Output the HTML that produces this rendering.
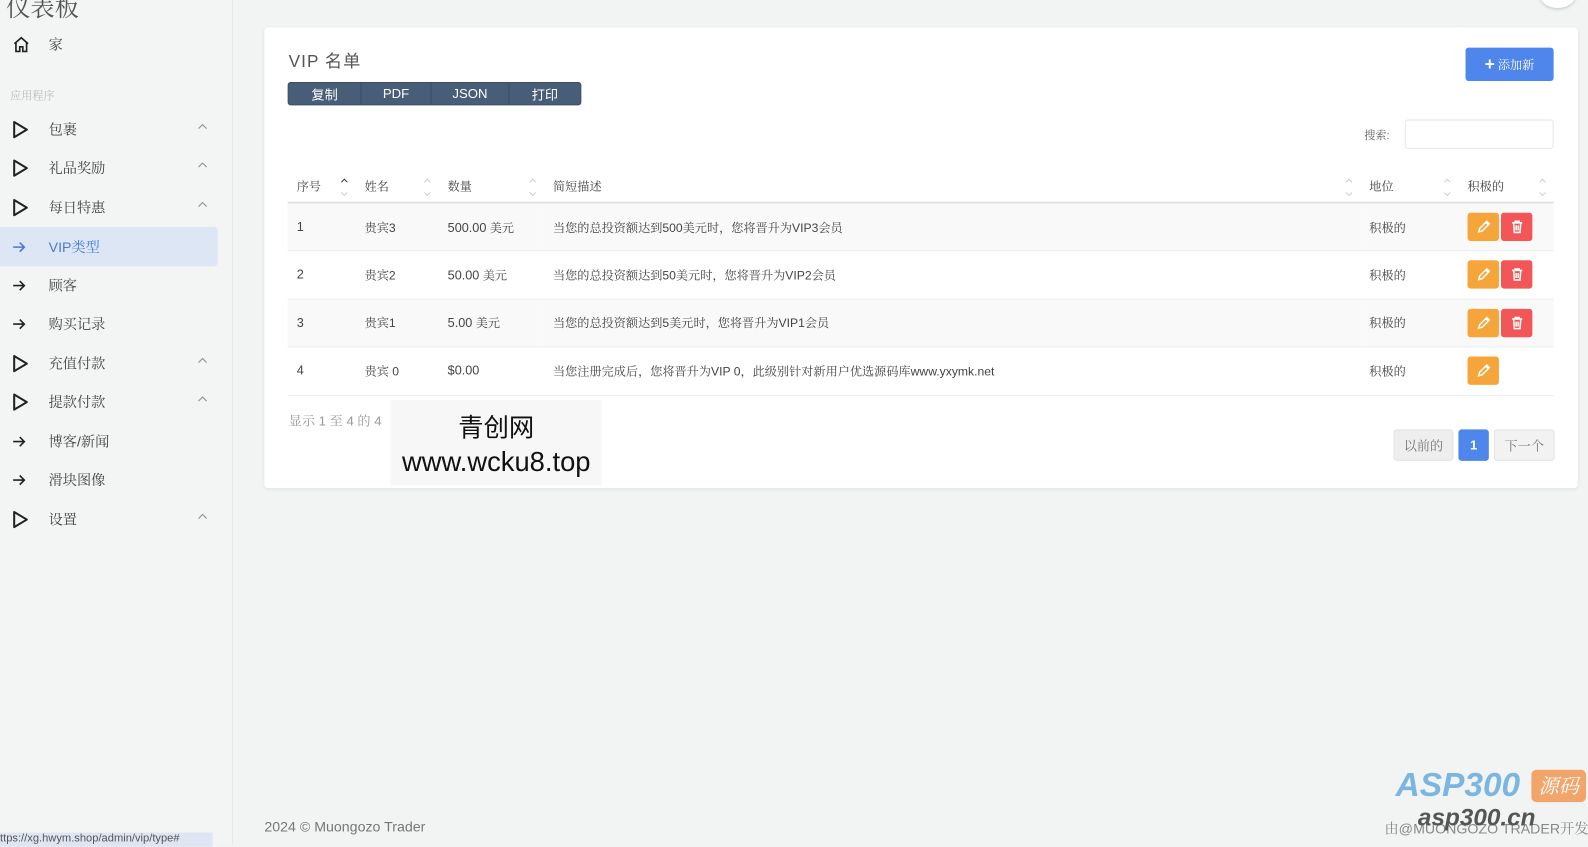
<!DOCTYPE html>
<html><head><meta charset="utf-8">
<style>
*{box-sizing:border-box;margin:0;padding:0}
body{width:1588px;height:844px;overflow:hidden;background:#f2f3f3;font-family:"Liberation Sans","Noto Serif CJK SC",serif;color:#333;position:relative}
#w{position:absolute;left:0;top:0;width:1568px;height:834px;transform:scale(1.0128);transform-origin:0 0}
.sb{position:absolute;left:0;top:0;width:230px;height:834px;background:#f3f4f4;border-right:1px solid #e6e8ea}
.title{position:absolute;left:6px;top:-12px;font-size:24px;color:#555}
.it{position:absolute;left:0;width:215px;height:39px;display:flex;align-items:center;font-size:14px;color:#444}
.it .ic{width:48px;padding-left:12px;display:flex;align-items:center}
.it .car{position:absolute;right:10px;top:14px}
.act{background:#dce6f5;color:#4a7bd0;border-radius:0 4px 4px 0}
.card{position:absolute;left:261px;top:27px;width:1297px;height:455px;background:#fff;border-radius:4px;box-shadow:0 1px 3px rgba(0,0,0,.08)}
.h{position:absolute;left:24px;top:19px;font-size:17px;color:#555;font-family:"Liberation Sans","Noto Sans CJK SC",sans-serif;letter-spacing:1px}
.bg{position:absolute;left:23px;top:54px;width:290px;height:23px;background:#475d78;border-radius:3px;display:flex;border:1px solid #3b4e66}
.bg div{color:#fff;font-size:13px;font-family:"Liberation Sans","Noto Sans CJK SC",sans-serif;display:flex;align-items:center;justify-content:center;border-right:1px solid #3b4e66}
.add{position:absolute;left:1186px;top:20px;width:87px;height:33px;background:#4f86ec;border-radius:3px;color:#fff;font-size:12px;display:flex;align-items:center;justify-content:center}
.srch{position:absolute;left:1086px;top:98px;font-size:11px;color:#666}
.inp{position:absolute;left:1126px;top:91px;width:147px;height:29px;border:1px solid #e4e6e8;border-radius:3px}
table{position:absolute;left:23px;top:140px;width:1250px;border-collapse:collapse;font-size:12px}
th{text-align:left;font-weight:normal;height:33px;padding-left:9px;border-bottom:2px solid #dee2e6;position:relative;color:#444}
th .s{position:absolute;right:6px;top:8px}
td{height:47.5px;padding-left:9px;border-bottom:1px solid #eceef0;color:#444;font-size:12px}
tr.st td{background:#f9f9f9}
.n{font-family:"Liberation Sans",sans-serif;font-size:12.5px}
.b{display:inline-flex;align-items:center;justify-content:center;width:31px;height:28px;border-radius:3px;vertical-align:middle;margin-right:2px}
.ed{background:#f6a53a}.dl{background:#f25656}
.info{position:absolute;left:24px;top:378px;font-size:13px;color:#999}
.pg{position:absolute;top:397px;height:31px;font-size:13px;display:flex;align-items:center;justify-content:center;border-radius:3px}
.wm{position:absolute;left:386px;top:395px;width:208px;height:84px;background:#f7f7f7;text-align:center;font-family:"Liberation Sans","Noto Sans CJK SC",sans-serif;color:#111}
</style></head><body><div id="w">
<svg width="0" height="0" style="position:absolute"><defs>
<symbol id="tri" viewBox="0 0 16 18"><path d="M2 1.5L14.5 9 2 16.5Z" fill="none" stroke="#222" stroke-width="2" stroke-linejoin="round"/></symbol>
<symbol id="arr" viewBox="0 0 14 14"><path d="M1 7h11M7.5 2.5L12 7l-4.5 4.5" fill="none" stroke="currentColor" stroke-width="1.6"/></symbol>
<symbol id="car" viewBox="0 0 10 6"><path d="M1 5l4-4 4 4" fill="none" stroke="#999" stroke-width="1.2"/></symbol>
<symbol id="srt" viewBox="0 0 10 20"><path d="M2 5l3-3 3 3" fill="none" stroke="currentColor" stroke-width="1"/><path d="M2 15l3 3 3-3" fill="none" stroke="#ccc" stroke-width="1"/></symbol>
<symbol id="pen" viewBox="0 0 16 16"><path d="M3 13l1-3.5L11 2.5l2.5 2.5L6.5 12Z M10 3.5l2.5 2.5" fill="none" stroke="#fff" stroke-width="1.5"/></symbol>
<symbol id="bin" viewBox="0 0 16 16"><path d="M3 4h10M6 4V2.5h4V4M4.5 4l.7 9.5h5.6L11.5 4M7 6.5v5M9 6.5v5" fill="none" stroke="#fff" stroke-width="1.5"/></symbol>
</defs></svg>
<div class="sb">
<div class="title">仪表板</div>
<div class="it" style="top:24px"><span class="ic"><svg width="18" height="18" viewBox="0 0 24 24" fill="none" stroke="#222" stroke-width="2.2"><path d="M3 11L12 3l9 8M5 9v12h5v-6h4v6h5V9"/></svg></span>家</div>
<div style="position:absolute;left:10px;top:86px;font-size:11px;color:#bbb">应用程序</div>
<div class="it" style="top:108px"><span class="ic"><svg width="16" height="18"><use href="#tri"/></svg></span>包裹<svg class="car" width="10" height="6"><use href="#car"/></svg></div>
<div class="it" style="top:146px"><span class="ic"><svg width="16" height="18"><use href="#tri"/></svg></span>礼品奖励<svg class="car" width="10" height="6"><use href="#car"/></svg></div>
<div class="it" style="top:185px"><span class="ic"><svg width="16" height="18"><use href="#tri"/></svg></span>每日特惠<svg class="car" width="10" height="6"><use href="#car"/></svg></div>
<div class="it act" style="top:224px"><span class="ic" style="color:#4a7bd0"><svg width="14" height="14"><use href="#arr"/></svg></span>VIP类型</div>
<div class="it" style="top:262px"><span class="ic" style="color:#222"><svg width="14" height="14"><use href="#arr"/></svg></span>顾客</div>
<div class="it" style="top:300px"><span class="ic" style="color:#222"><svg width="14" height="14"><use href="#arr"/></svg></span>购买记录</div>
<div class="it" style="top:339px"><span class="ic"><svg width="16" height="18"><use href="#tri"/></svg></span>充值付款<svg class="car" width="10" height="6"><use href="#car"/></svg></div>
<div class="it" style="top:377px"><span class="ic"><svg width="16" height="18"><use href="#tri"/></svg></span>提款付款<svg class="car" width="10" height="6"><use href="#car"/></svg></div>
<div class="it" style="top:416px"><span class="ic" style="color:#222"><svg width="14" height="14"><use href="#arr"/></svg></span>博客/新闻</div>
<div class="it" style="top:454px"><span class="ic" style="color:#222"><svg width="14" height="14"><use href="#arr"/></svg></span>滑块图像</div>
<div class="it" style="top:493px"><span class="ic"><svg width="16" height="18"><use href="#tri"/></svg></span>设置<svg class="car" width="10" height="6"><use href="#car"/></svg></div>
<div style="position:absolute;left:0;top:822px;width:210px;height:14px;background:#dfe6f3;font-size:11px;color:#555;white-space:nowrap;overflow:hidden">ttps://xg.hwym.shop/admin/vip/type#</div>
</div>
<div style="position:absolute;left:1520px;top:-20px;width:36px;height:28px;border-radius:50%;background:#fff;box-shadow:0 1px 3px rgba(0,0,0,.2)"></div>
<div class="card">
<div class="h">VIP 名单</div>
<div class="bg"><div style="width:72px">复制</div><div style="width:69px">PDF</div><div style="width:77px">JSON</div><div style="width:70px;border:0">打印</div></div>
<div class="add"><b style="font-size:17px;margin-right:3px">+</b>添加新</div>
<div class="srch">搜索:</div><div class="inp"></div>
<table>
<tr><th style="width:67px">序号<svg class="s" width="10" height="20" style="color:#333"><use href="#srt"/></svg></th><th style="width:82px">姓名<svg class="s" width="10" height="20" style="color:#ccc"><use href="#srt"/></svg></th><th style="width:104px">数量<svg class="s" width="10" height="20" style="color:#ccc"><use href="#srt"/></svg></th><th style="width:806px">简短描述<svg class="s" width="10" height="20" style="color:#ccc"><use href="#srt"/></svg></th><th style="width:97px">地位<svg class="s" width="10" height="20" style="color:#ccc"><use href="#srt"/></svg></th><th>积极的<svg class="s" width="10" height="20" style="color:#ccc"><use href="#srt"/></svg></th></tr>
<tr class="st"><td class="n">1</td><td>贵宾3</td><td><span class="n">500.00</span> 美元</td><td>当您的总投资额达到500美元时，您将晋升为VIP3会员</td><td>积极的</td><td><span class="b ed"><svg width="16" height="16"><use href="#pen"/></svg></span><span class="b dl"><svg width="16" height="16"><use href="#bin"/></svg></span></td></tr>
<tr><td class="n">2</td><td>贵宾2</td><td><span class="n">50.00</span> 美元</td><td>当您的总投资额达到50美元时，您将晋升为VIP2会员</td><td>积极的</td><td><span class="b ed"><svg width="16" height="16"><use href="#pen"/></svg></span><span class="b dl"><svg width="16" height="16"><use href="#bin"/></svg></span></td></tr>
<tr class="st"><td class="n">3</td><td>贵宾1</td><td><span class="n">5.00</span> 美元</td><td>当您的总投资额达到5美元时，您将晋升为VIP1会员</td><td>积极的</td><td><span class="b ed"><svg width="16" height="16"><use href="#pen"/></svg></span><span class="b dl"><svg width="16" height="16"><use href="#bin"/></svg></span></td></tr>
<tr><td class="n">4</td><td>贵宾 0</td><td class="n">$0.00</td><td>当您注册完成后，您将晋升为VIP 0，此级别针对新用户优选源码库www.yxymk.net</td><td>积极的</td><td><span class="b ed"><svg width="16" height="16"><use href="#pen"/></svg></span></td></tr>
</table>
<div class="info">显示 1 至 4 的 4</div>
<div class="pg" style="left:1115px;width:59px;background:#eee;color:#777;border:1px solid #e2e2e2">以前的</div>
<div class="pg" style="left:1179px;width:30px;background:#4f86ec;color:#fff;font-weight:bold">1</div>
<div class="pg" style="left:1214px;width:60px;background:#f2f2f2;color:#777;border:1px solid #e2e2e2">下一个</div>
</div>
<div class="wm"><div style="font-size:25px;margin-top:8px">青创网</div><div style="font-size:27px;margin-top:2px">www.wcku8.top</div></div>
<div style="position:absolute;left:261px;top:808px;font-size:14px;color:#777">2024 © Muongozo Trader</div>
<div style="position:absolute;left:1367px;top:808px;font-size:14px;color:#888;white-space:nowrap">由@MUONGOZO TRADER开发</div>
<div style="position:absolute;left:1378px;top:756px;font-size:33px;font-style:italic;font-weight:bold;color:#7ab6e0">ASP300</div>
<div style="position:absolute;left:1512px;top:760px;width:54px;height:32px;background:#f2a56a;border-radius:5px;color:#fff;font-size:20px;text-align:center;font-style:italic">源码</div>
<div style="position:absolute;left:1400px;top:794px;font-size:24px;font-style:italic;font-weight:bold;color:#555">asp300.cn</div>
</div></body></html>
